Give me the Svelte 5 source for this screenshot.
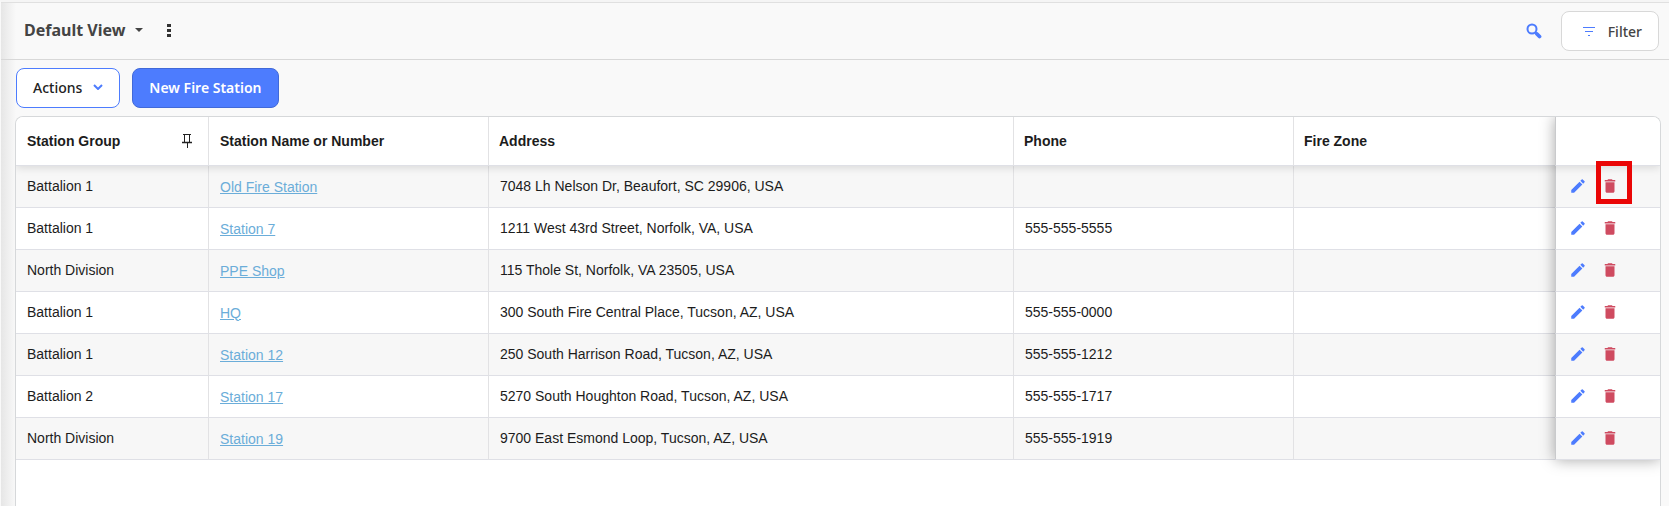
<script lang="ts">
    interface Station {
        group: string;
        name: string;
        address: string;
        phone: string;
        zone: string;
    }

    const stations: Station[] = [
        { group: 'Battalion 1', name: 'Old Fire Station', address: '7048 Lh Nelson Dr, Beaufort, SC 29906, USA', phone: '', zone: '' },
        { group: 'Battalion 1', name: 'Station 7', address: '1211 West 43rd Street, Norfolk, VA, USA', phone: '555-555-5555', zone: '' },
        { group: 'North Division', name: 'PPE Shop', address: '115 Thole St, Norfolk, VA 23505, USA', phone: '', zone: '' },
        { group: 'Battalion 1', name: 'HQ', address: '300 South Fire Central Place, Tucson, AZ, USA', phone: '555-555-0000', zone: '' },
        { group: 'Battalion 1', name: 'Station 12', address: '250 South Harrison Road, Tucson, AZ, USA', phone: '555-555-1212', zone: '' },
        { group: 'Battalion 2', name: 'Station 17', address: '5270 South Houghton Road, Tucson, AZ, USA', phone: '555-555-1717', zone: '' },
        { group: 'North Division', name: 'Station 19', address: '9700 East Esmond Loop, Tucson, AZ, USA', phone: '555-555-1919', zone: '' }
    ];

    let highlighted = $state(0);
</script>

<div class="page">
    <header class="topbar">
        <button class="view">
            Default View
            <svg width="8" height="4" viewBox="0 0 8 4"><path d="M0 0h8L4 4z" fill="currentColor" /></svg>
        </button>
        <button class="icon-btn more" aria-label="More options">
            <svg width="4" height="14" viewBox="0 0 4 14" fill="#333">
                <rect width="4" height="3" y="1" />
                <rect width="4" height="3" y="6" />
                <rect width="4" height="3" y="11" />
            </svg>
        </button>
        <button class="icon-btn search" aria-label="Search">
            <svg width="16" height="16" viewBox="0 0 16 16" fill="none" stroke="#4d7cfe">
                <circle cx="6" cy="6" r="4.5" stroke-width="2" />
                <path d="M9.5 9.5l1.5 1.5" stroke-width="2" />
                <path d="M11 11l2.5 2.5" stroke-width="3.8" stroke-linecap="round" />
            </svg>
        </button>
        <button class="btn filter">
            <svg width="12" height="9" viewBox="0 0 12 9" fill="#4d7cfe">
                <path d="M0 0h12v1H0zM2 4h8v1H2zM5 8h2v1H5z" />
            </svg>
            Filter
        </button>
    </header>

    <div class="toolbar">
        <button class="btn actions">
            Actions
            <svg width="10" height="6" viewBox="0 0 10 6" fill="none" stroke="#4d7cfe" stroke-width="2">
                <path d="M1 1l4 4 4-4" />
            </svg>
        </button>
        <button class="btn primary">New Fire Station</button>
    </div>

    <div class="grid">
        <div class="table-wrap">
            <table>
                <colgroup>
                    <col class="c-group" />
                    <col class="c-name" />
                    <col class="c-address" />
                    <col class="c-phone" />
                    <col />
                    <col class="c-tools" />
                </colgroup>
                <thead>
                    <tr>
                        <th>
                            <div class="pinned">
                                Station Group
                                <svg width="10" height="14" viewBox="0 0 10 14" fill="none" stroke="#222">
                                    <path d="M1 .5h8M2.5 .5v8M7.5 .5v8M5.5 9v5" />
                                    <path d="M0 8.5h10" stroke-width="1.4" />
                                </svg>
                            </div>
                        </th>
                        <th class="name">Station Name or Number</th>
                        <th>Address</th>
                        <th>Phone</th>
                        <th>Fire Zone</th>
                        <th class="tools" aria-label="Row actions"></th>
                    </tr>
                </thead>
                <tbody>
                    {#each stations as station, i}
                        <tr>
                            <td>{station.group}</td>
                            <td class="name"><a href="#station">{station.name}</a></td>
                            <td>{station.address}</td>
                            <td>{station.phone}</td>
                            <td>{station.zone}</td>
                            <td class="tools">
                                <div class="tool-list">
                                    <button class="icon-btn" aria-label="Edit {station.name}">
                                        <svg width="18" height="18" viewBox="0 0 24 24" fill="#4d7cfe">
                                            <path d="M3 17.25V21h3.75L17.81 9.94l-3.75-3.75L3 17.25zM20.71 7.04a1 1 0 0 0 0-1.41l-2.34-2.34a1 1 0 0 0-1.41 0l-1.83 1.83 3.75 3.75 1.83-1.83z" />
                                        </svg>
                                    </button>
                                    <button class="icon-btn" class:highlight={i === highlighted} aria-label="Delete {station.name}">
                                        <svg width="18" height="18" viewBox="0 0 24 24" fill="#cf4b60">
                                            <path d="M6 19c0 1.1.9 2 2 2h8c1.1 0 2-.9 2-2V7H6v12zM19 4h-3.5l-1-1h-5l-1 1H5v2h14V4z" />
                                        </svg>
                                    </button>
                                </div>
                            </td>
                        </tr>
                    {/each}
                </tbody>
            </table>
            <div class="tools-shadow"></div>
        </div>
    </div>
</div>

<style>
    :global(body) {
        margin: 0;
        background: #f9f9f9;
    }

    .page {
        box-sizing: border-box;
        min-height: 100vh;
        display: flex;
        flex-direction: column;
        border-top: 2px solid #f5f5f5;
        border-left: 1px solid #f9f9f9;
        background: linear-gradient(to right, #e6e6e6, #f9f9f9 15px);
        font-family: "Noto Sans", sans-serif;
        color: #222;
    }

    button {
        font: inherit;
        color: inherit;
        cursor: pointer;
    }

    svg {
        display: block;
        flex: none;
    }

    .topbar {
        display: flex;
        align-items: center;
        padding: 8px 10px 8px 23px;
        border-top: 1px solid #e0e0e0;
        border-bottom: 1px solid #d8d8d8;
    }

    .view {
        display: flex;
        align-items: center;
        gap: 10px;
        padding: 0 0 3px;
        border: 0;
        background: none;
        font-size: 16px;
        font-weight: 700;
        line-height: 24px;
        color: #444;
    }

    .icon-btn {
        padding: 0;
        border: 0;
        background: none;
    }

    .more {
        margin-left: 24px;
        padding-bottom: 2px;
    }

    .search {
        margin-left: auto;
        margin-right: 19px;
    }

    .btn {
        box-sizing: border-box;
        display: flex;
        align-items: center;
        height: 40px;
        padding: 0 16px;
        border: 1px solid #4d7cfe;
        border-radius: 8px;
        background: #fff;
        font-size: 14px;
        font-weight: 500;
    }

    .filter {
        gap: 13px;
        padding: 0 16px 0 21px;
        border-color: #d8d8d8;
        color: #444;
    }

    .actions {
        gap: 11px;
    }

    .primary {
        border-color: #4169d8;
        background: #4d7cfe;
        color: #fff;
        font-weight: 600;
    }

    .toolbar {
        display: flex;
        gap: 12px;
        padding: 8px 15px;
    }

    .toolbar .btn {
        padding: 0 16px 2px;
    }

    .grid {
        flex: 1;
        margin: 0 8px 0 14px;
        border: 1px solid #d6d8da;
        border-bottom: 0;
        border-radius: 8px 8px 0 0;
        background: #fff;
        overflow: hidden;
    }

    .table-wrap {
        position: relative;
    }

    table {
        width: 100%;
        table-layout: fixed;
        border-collapse: separate;
        border-spacing: 0;
        font-family: "Liberation Sans", Arial, sans-serif;
        font-size: 14px;
        line-height: 20px;
        color: #1c1c1c;
    }

    .c-group {
        width: 193px;
    }

    .c-name,
    .c-phone {
        width: 280px;
    }

    .c-address {
        width: 525px;
    }

    .c-tools {
        width: 105px;
    }

    thead {
        position: relative;
        z-index: 1;
        box-shadow: 0 2px 8px rgba(0, 0, 0, 0.12);
    }

    th,
    td {
        box-sizing: border-box;
        border-right: 1px solid #e2e2e4;
        border-bottom: 1px solid #dfe0e6;
        text-align: left;
        white-space: nowrap;
    }

    th {
        height: 49px;
        padding: 0 10px;
        background: #fff;
        font-weight: 700;
    }

    td {
        height: 42px;
        padding: 0 11px 2px;
    }

    th:nth-last-child(-n + 2),
    td:nth-last-child(-n + 2) {
        border-right: 0;
    }

    tbody tr:nth-child(odd) {
        background: #f7f7f7;
    }

    .pinned {
        display: flex;
        align-items: center;
        justify-content: space-between;
        padding-right: 6px;
        padding-left: 1px;
    }

    th.name {
        padding-left: 11px;
    }

    td.name {
        padding-bottom: 0;
    }

    a {
        color: #6badd9;
        text-decoration: underline;
    }

    th.tools,
    td.tools {
        padding: 0 13px 2px;
        border-left: 1px solid #c9cacc;
    }

    .tool-list {
        display: flex;
        gap: 14px;
    }

    .highlight {
        position: relative;
        z-index: 2;
    }

    .highlight::after {
        content: "";
        position: absolute;
        top: -16px;
        left: -5px;
        width: 26px;
        height: 33px;
        border: 5px solid #ea0606;
    }

    .tools-shadow {
        position: absolute;
        top: 0;
        right: 0;
        bottom: 0;
        z-index: 1;
        width: 105px;
        box-shadow: 0 0 14px rgba(0, 0, 0, 0.35);
        pointer-events: none;
    }
</style>
